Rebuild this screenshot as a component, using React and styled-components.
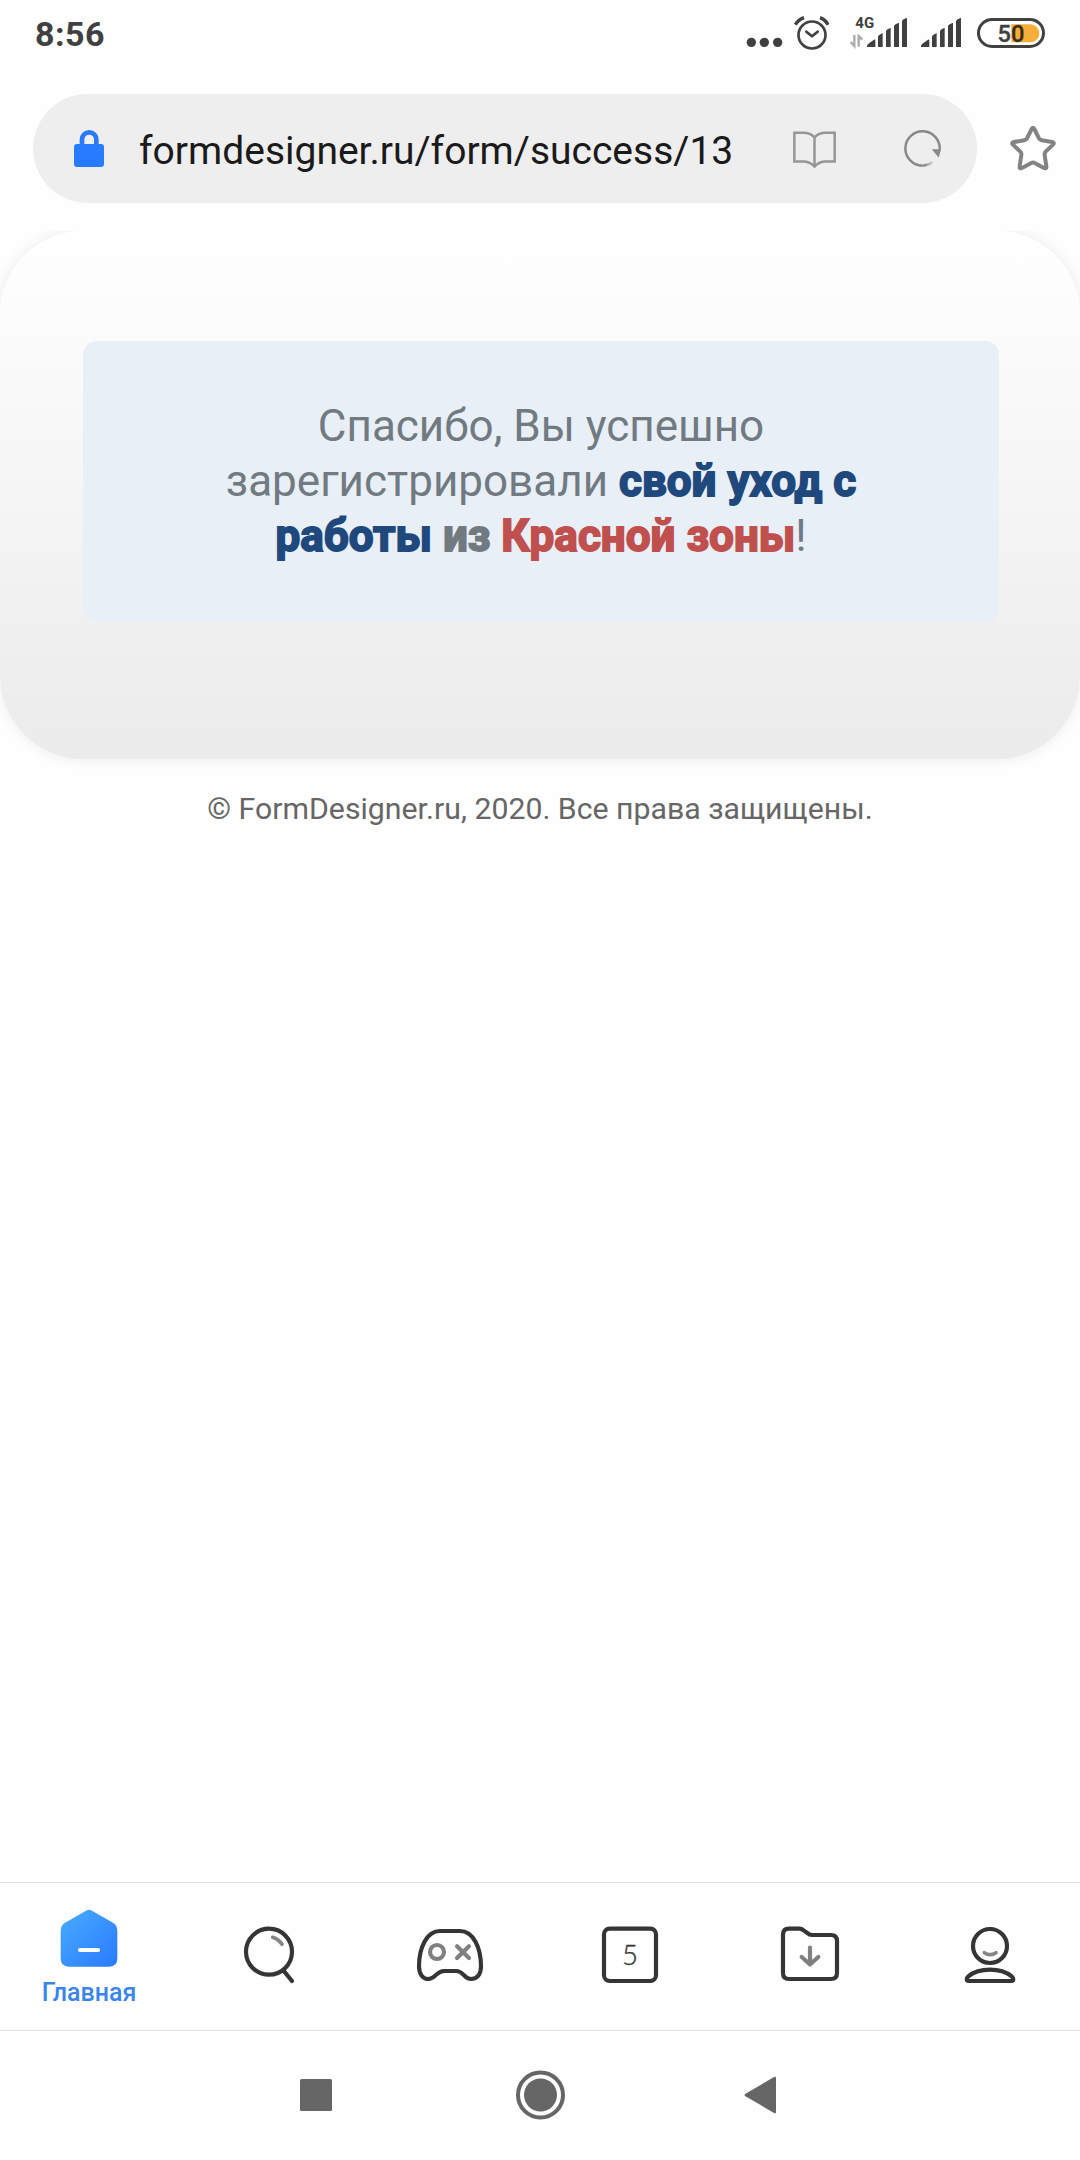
import React from 'react';
import styled, { createGlobalStyle } from 'styled-components';

const GlobalStyle = createGlobalStyle`
    * {
        box-sizing: border-box;
    }

    body {
        margin: 0;
        background: #fefefe;
        font-family: Roboto, 'Noto Sans', sans-serif;
    }
`;

const Screen = styled.div`
    display: flex;
    flex-direction: column;
    width: 1080px;
    height: 2160px;
    overflow: hidden;
    background: #fefefe;
`;

/* Status bar */
const StatusBar = styled.header`
    display: flex;
    justify-content: space-between;
    align-items: flex-start;
    height: 70px;
    padding: 15px 35px 0;
`;

const Clock = styled.span`
    font-size: 34px;
    line-height: 38px;
    font-weight: 700;
    letter-spacing: 0.5px;
    color: #404040;
`;

const StatusIcons = styled.div`
    display: flex;
    padding-top: 1px;
`;

const StatusIcon = styled.svg`
    flex: none;
    width: ${({ $width }) => $width}px;
    height: 34px;
    margin-left: ${({ $gap }) => $gap || 0}px;
    overflow: visible;
`;

/* Address bar */
const AddressBar = styled.div`
    display: flex;
    align-items: center;
    height: 161px;
    padding: 0 24px 4px 33px;
`;

const UrlField = styled.div`
    display: flex;
    align-items: center;
    width: 944px;
    height: 109px;
    padding: 0 36px 0 41px;
    border-radius: 55px;
    background: #eeeeee;
`;

const Url = styled.span`
    flex: 1;
    margin-left: 35px;
    padding-top: 5px;
    font-size: 39px;
    line-height: 46px;
    white-space: nowrap;
    color: #1a1a1a;
`;

const BarIcon = styled.svg`
    flex: none;
    width: ${({ $width }) => $width}px;
    height: ${({ $height }) => $height}px;
    margin-left: ${({ $gap }) => $gap || 0}px;
`;

/* Web page */
const Page = styled.main`
    flex: 1;
    overflow: hidden;
`;

const FormCard = styled.section`
    height: 528px;
    padding: 110px 81px 0 83px;
    border-radius: 83px;
    background: linear-gradient(#ffffff, #ebebeb);
    box-shadow: 0 0 14px rgba(0, 0, 0, 0.08);
`;

const Message = styled.div`
    height: 281px;
    padding-top: 58px;
    border-radius: 14px;
    background: #e8eff7;
    font-size: 44px;
    line-height: 54.9px;
    text-align: center;
    color: #717981;
`;

const Strong = styled.strong`
    font-weight: 700;
    color: ${({ $color }) => $color || 'inherit'};
    -webkit-text-stroke: 1.8px currentColor;
`;

const Copyright = styled.footer`
    margin-top: 32px;
    font-size: 30.25px;
    line-height: 36px;
    text-align: center;
    color: #666666;
`;

/* Browser tabs */
const TabBar = styled.nav`
    display: grid;
    grid-template-columns: repeat(6, 1fr);
    height: 149px;
    border-top: 1px solid #e0e0e0;
    border-bottom: 1px solid #e0e0e0;
`;

const Tab = styled.div`
    display: flex;
    flex-direction: column;
    align-items: center;
    padding-top: ${({ $active }) => ($active ? 25 : 42)}px;
`;

const TabIcon = styled.svg`
    width: 72px;
    height: 60px;
    fill: none;
    stroke: #353535;
    stroke-width: 12.5;
    stroke-linecap: round;
    stroke-linejoin: round;
`;

const TabLabel = styled.span`
    margin: 10px 2px 0 0;
    font-size: 25px;
    line-height: 30px;
    font-weight: 500;
    color: #3a86e8;
`;

/* System navigation */
const SystemBar = styled.nav`
    display: flex;
    justify-content: center;
    align-items: center;
    gap: 174px;
    height: 129px;
    padding-bottom: 2px;
`;

const SystemIcon = styled.svg`
    width: 50px;
    height: 50px;
    fill: #666666;
`;

const SignalBars = () => (
    <path d="M0 93 V89 Q2 84 7 81 L21 71 Q25 69 25 74 V93Z M33 93 V62 Q34 58 38 56 L47 51 V93Z M57 93 V46 Q58 42 62 40 L71 35 V93Z M81 93 V31 Q82 27 86 25 L96 20 V93Z M105 93 V16 Q106 12 110 10 L120 5 V93Z" />
);

const Status = () => (
    <StatusBar>
        <Clock>8:56</Clock>
        <StatusIcons>
            <StatusIcon $width={36} viewBox="0 0 108 102" fill="#404040">
                <circle cx="13" cy="79" r="14" />
                <circle cx="52" cy="79" r="14" />
                <circle cx="92" cy="79" r="14" />
            </StatusIcon>
            <StatusIcon $width={35} $gap={11} viewBox="0 0 105 102" fill="none" stroke="#404040" strokeWidth="8">
                <circle cx="54" cy="57" r="40.5" />
                <path d="M37 47 L54 61 L71 47" strokeLinecap="round" strokeLinejoin="round" />
                <path d="M4 26 Q13 11 30 5 M78 5 Q94 11 102 26" strokeWidth="10" />
            </StatusIcon>
            <StatusIcon $width={57} $gap={21} viewBox="0 0 171 102" fill="#404040">
                <text x="16" y="36" fontSize="45" fontWeight="700">4G</text>
                <path d="M13 57 V90 L2 78 M26 92 V60 L37 71" fill="none" stroke="#aaaaaa" strokeWidth="7" />
                <g transform="translate(51 0)">
                    <SignalBars />
                </g>
            </StatusIcon>
            <StatusIcon $width={40} $gap={14} viewBox="0 0 120 102" fill="#404040">
                <SignalBars />
            </StatusIcon>
            <StatusIcon $width={68} $gap={16} viewBox="0 0 204 102">
                <rect x="4.5" y="10.5" width="195" height="81" rx="40.5" fill="none" stroke="#404040" strokeWidth="9" />
                <path d="M103 25 H160 A27 27 0 0 1 160 79 H103Z" fill="#f6ae3b" />
                <text x="102" y="78" fontSize="71" fontWeight="500" textAnchor="middle" fill="#404040" stroke="#404040" strokeWidth="1">
                    5<tspan fill="#3d2b0f">0</tspan>
                </text>
            </StatusIcon>
        </StatusIcons>
    </StatusBar>
);

const Address = () => (
    <AddressBar>
        <UrlField>
            <BarIcon $width={30} $height={37} viewBox="0 0 90 111">
                <rect y="42" width="90" height="69" rx="9" fill="#267bff" />
                <path d="M24 48 V28.5 A21.5 21.5 0 0 1 67 28.5 V48" fill="none" stroke="#267bff" strokeWidth="14" />
            </BarIcon>
            <Url>formdesigner.ru/form/success/13</Url>
            <BarIcon $width={43} $height={38} viewBox="0 -4 130 114" fill="none" stroke="#969696" strokeWidth="7.5">
                <path d="M4 4 H32 Q52 4 65 18 Q78 4 98 4 H126 V91 H98 Q80 91 65 106 Q50 91 32 91 H4Z M65 18 V106" />
            </BarIcon>
            <BarIcon $width={37} $height={37} $gap={68} viewBox="0 0 112 112">
                <defs>
                    <linearGradient id="fade" x1="62" y1="0" x2="90" y2="0" gradientUnits="userSpaceOnUse">
                        <stop offset="0" stopColor="#8c8c8c" />
                        <stop offset="1" stopColor="#8c8c8c" stopOpacity="0.15" />
                    </linearGradient>
                </defs>
                <path d="M108 60 A52 52 0 1 0 56 108" fill="none" stroke="#888888" strokeWidth="7.5" />
                <path d="M56 108 A52 52 0 0 0 87 97" fill="none" stroke="url(#fade)" strokeWidth="7.5" />
                <path d="M84 58 H112 L105 83Z" fill="#888888" />
            </BarIcon>
        </UrlField>
        <BarIcon $width={46} $height={45} $gap={33} viewBox="0 0 138 135">
            <path
                d="M65 9 Q69 2 73 9 L87 37 Q89 42 95 43 L126 48 Q135 50 129 56 L107 77 Q103 81 104 87 L109 121 Q110 129 102 126 L74 111 Q69 108 64 111 L36 126 Q28 129 29 121 L34 87 Q35 81 31 77 L9 56 Q3 50 12 48 L43 43 Q49 42 51 37Z"
                fill="none"
                stroke="#838383"
                strokeWidth="12"
                strokeLinejoin="round"
            />
        </BarIcon>
    </AddressBar>
);

const Tabs = () => (
    <TabBar>
        <Tab $active>
            <TabIcon viewBox="0 0 216 180">
                <defs>
                    <linearGradient id="home" x1="0" y1="0" x2="1" y2="1">
                        <stop offset="0.15" stopColor="#45a5ff" />
                        <stop offset="0.95" stopColor="#2a7cff" />
                    </linearGradient>
                </defs>
                <g transform="translate(20 4)" stroke="none">
                    <path
                        d="M76 4 Q85 -2 94 4 L157 40 Q170 48 170 64 V147 Q170 172 146 172 H24 Q0 172 0 147 V64 Q0 48 13 40Z"
                        fill="url(#home)"
                    />
                    <path d="M58 122 H112" stroke="#ffffff" />
                </g>
            </TabIcon>
            <TabLabel>Главная</TabLabel>
        </Tab>
        <Tab>
            <TabIcon viewBox="0 0 216 180">
                <circle cx="105" cy="80" r="69" />
                <path d="M148 136 L174 168" />
                <path d="M116 37 Q134 43 144 58" stroke="#858585" strokeWidth="11" />
            </TabIcon>
        </Tab>
        <Tab>
            <TabIcon viewBox="0 0 216 180">
                <path d="M78 18 H138 C178 18 201 68 201 124 C201 148 189 162 171 162 C149 162 150 138 126 138 H90 C66 138 65 162 43 162 C27 162 15 148 15 124 C15 68 38 18 78 18Z" />
                <g stroke="#808080">
                    <circle cx="69" cy="81" r="21" />
                    <path d="M129 64 L165 99 M165 64 L129 99" />
                </g>
            </TabIcon>
        </Tab>
        <Tab>
            <TabIcon viewBox="0 0 216 180">
                <rect x="30" y="11" width="156" height="157" rx="17" />
                <text x="108" y="120" fontFamily="Lato" fontWeight="300" fontSize="83" textAnchor="middle" fill="#353535" strokeWidth="1">
                    5
                </text>
            </TabIcon>
        </Tab>
        <Tab>
            <TabIcon viewBox="0 0 216 180">
                <path d="M45 11 H77 Q84 12 90 17 L100 24 Q106 30 114 30 H171 Q189 30 189 48 V144 Q189 162 171 162 H45 Q27 162 27 144 V29 Q27 11 45 11Z" />
                <path d="M108 68 V118 M83 96 L108 118 L133 96" stroke="#808080" />
            </TabIcon>
        </Tab>
        <Tab>
            <TabIcon viewBox="0 0 216 180">
                <circle cx="108" cy="63" r="51" />
                <path d="M91 83 Q108 95 126 83" stroke="#858585" strokeWidth="11" />
                <path d="M44 168 H172 C180 168 179 159 173 154 C157 141 134 134 108 134 C82 134 59 141 43 154 C37 159 36 168 44 168Z" />
            </TabIcon>
        </Tab>
    </TabBar>
);

const App = () => (
    <>
        <GlobalStyle />
        <Screen>
            <Status />
            <Address />
            <Page>
                <FormCard>
                    <Message>
                        Спасибо, Вы успешно
                        <br />
                        зарегистрировали <Strong $color="#1f497d">свой уход с</Strong>
                        <br />
                        <Strong $color="#1f497d">работы</Strong> <Strong>из</Strong>{' '}
                        <Strong $color="#c0504d">Красной зоны</Strong>!
                    </Message>
                </FormCard>
                <Copyright>© FormDesigner.ru, 2020. Все права защищены.</Copyright>
            </Page>
            <Tabs />
            <SystemBar>
                <SystemIcon viewBox="0 0 50 50">
                    <rect x="9" y="9" width="32" height="32" rx="1.5" />
                </SystemIcon>
                <SystemIcon viewBox="0 0 50 50">
                    <circle cx="25.5" cy="25" r="22.5" fill="none" stroke="#666666" strokeWidth="4" />
                    <circle cx="25.5" cy="25" r="16.5" />
                </SystemIcon>
                <SystemIcon viewBox="0 0 50 50">
                    <path d="M6.5 23.8 L35 7 Q37 6 37 8 V42 Q37 44 35 43 L6.5 26.2 Q4.5 25 6.5 23.8Z" />
                </SystemIcon>
            </SystemBar>
        </Screen>
    </>
);

export default App;
